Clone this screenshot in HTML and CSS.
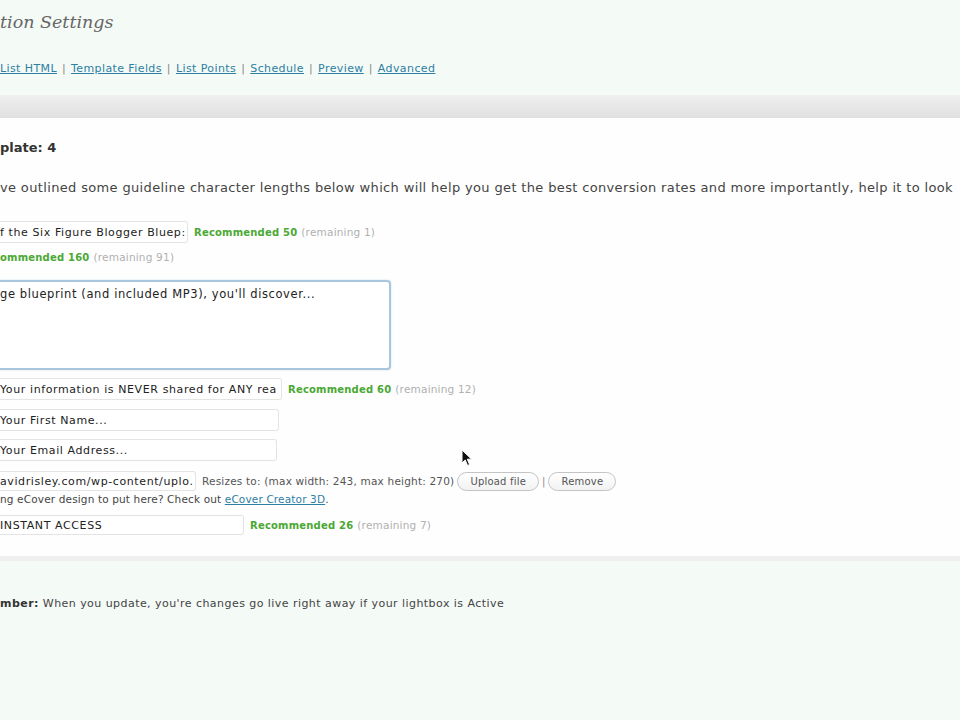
FILE: index.html
```html
<!DOCTYPE html>
<html>
<head>
<meta charset="utf-8">
<title>Settings</title>
<link rel="stylesheet" href="styles.css">
</head>
<body>
<div class="top">
  <h2 class="title">tion Settings</h2>
  <div class="tabs">
    <a href="#">List HTML</a><span class="sep">|</span><a href="#">Template Fields</a><span class="sep">|</span><a href="#">List Points</a><span class="sep">|</span><a href="#">Schedule</a><span class="sep">|</span><a href="#">Preview</a><span class="sep">|</span><a href="#">Advanced</a>
  </div>
</div>

<div class="panel">
  <div class="panel-head"></div>
  <div class="panel-body">
    <div class="label">plate: 4</div>
    <p class="intro">ve outlined some guideline character lengths below which will help you get the best conversion rates and more importantly, help it to look</p>

    <div class="row r1">
      <div class="field w188">f the Six Figure Blogger Bluep:</div>
      <span class="rec">Recommended 50</span><span class="rem">(remaining 1)</span>
    </div>
    <div class="row r2">
      <span class="rec">ommended 160</span><span class="rem">(remaining 91)</span>
    </div>
    <div class="area">ge blueprint (and included MP3), you'll discover...</div>

    <div class="row r3">
      <div class="field w282">Your information is NEVER shared for ANY rea</div>
      <span class="rec">Recommended 60</span><span class="rem">(remaining 12)</span>
    </div>
    <div class="row r4">
      <div class="field w279">Your First Name...</div>
    </div>
    <div class="row r5">
      <div class="field w277">Your Email Address...</div>
    </div>
    <div class="row r6">
      <div class="field w196">avidrisley.com/wp-content/uplo.</div>
      <span class="hint">Resizes to: (max width: 243, max height: 270)</span>
      <span class="btn first">Upload file</span><span class="bar">|</span><span class="btn">Remove</span>
    </div>
    <div class="small r7">ng eCover design to put here? Check out <a href="#">eCover Creator 3D</a>.</div>
    <div class="row r8">
      <div class="field w244">INSTANT ACCESS</div>
      <span class="rec">Recommended 26</span><span class="rem">(remaining 7)</span>
    </div>
  </div>
</div>

<p class="note"><b>mber:</b> When you update, you're changes go live right away if your lightbox is Active</p>

<svg class="cursor" width="12" height="18" viewBox="0 0 12 18">
  <path d="M1 1 L1 14 L4.2 11 L6.6 16.5 L8.6 15.6 L6.3 10.2 L10.6 10.2 Z" fill="#111" stroke="#fff" stroke-width="1"/>
</svg>
</body>
</html>
```

FILE: styles.css
```css
html, body {
  margin: 0;
  padding: 0;
}
body {
  background: #f4faf6;
  font-family: "DejaVu Sans", "Noto Sans", sans-serif;
  color: #333;
  width: 960px;
  height: 720px;
  overflow: hidden;
  position: relative;
}
.top {
  padding-top: 10px;
}
.title {
  margin: 0;
  font-family: "DejaVu Serif", "Liberation Serif", serif;
  font-style: italic;
  font-weight: normal;
  font-size: 17.5px;
  line-height: 24px;
  color: #666;
}
.tabs {
  margin-top: 27px;
  font-size: 11px;
  letter-spacing: 0.4px;
  line-height: 16px;
  white-space: nowrap;
}
.tabs a {
  color: #2d7fa3;
  text-decoration: underline;
}
.tabs .sep {
  color: #888;
  margin: 0 5px;
}
.panel {
  margin-top: 18px;
}
.panel-head {
  height: 23px;
  background: linear-gradient(#f0f0f0, #e9e9e9 40%, #e0e0e0);
}
.panel-body {
  background: #fefefe;
  padding: 22px 0 21px;
  border-bottom: 5px solid #efefef;
}
.label {
  font-weight: bold;
  font-size: 13px;
  line-height: 16px;
  color: #333;
}
.intro {
  margin: 24px 0 0;
  font-size: 13px;
  letter-spacing: 0.35px;
  line-height: 16px;
  color: #444;
  white-space: nowrap;
}
.row {
  display: flex;
  align-items: center;
  gap: 6px;
  white-space: nowrap;
}
.field {
  box-sizing: border-box;
  height: 22px;
  line-height: 21px;
  border: 1px solid #e4e4e4;
  border-left: none;
  border-radius: 0 3px 3px 0;
  background: #fff;
  font-size: 11px;
  letter-spacing: 0.6px;
  color: #222;
  overflow: hidden;
  white-space: nowrap;
}
.w188 { width: 188px; }
.w282 { width: 282px; }
.w279 { width: 279px; }
.w277 { width: 277px; }
.w196 { width: 196px; height: 20px; line-height: 19px; }
.w244 { width: 244px; height: 20px; line-height: 19px; }
.rec {
  color: #4aa834;
  font-weight: bold;
  font-size: 10px;
  letter-spacing: 0.2px;
}
.rem {
  color: #b0b0b0;
  font-size: 10.5px;
  letter-spacing: 0.2px;
  margin-left: -2px;
}
.r1 { margin-top: 25px; }
.r2 { margin-top: 7px; height: 14px; }
.area {
  box-sizing: border-box;
  margin-top: 16px;
  width: 391px;
  height: 90px;
  border: 2px solid #a9c6dc;
  border-left: none;
  border-radius: 0 4px 4px 0;
  box-shadow: 0 0 2px #c9dceb;
  background: #fff;
  padding-top: 5px;
  font-size: 11.5px;
  letter-spacing: 0.6px;
  line-height: 14px;
  color: #222;
  white-space: nowrap;
}
.r3 { margin-top: 8px; }
.r4 { margin-top: 9px; }
.r5 { margin-top: 8px; }
.r6 { margin-top: 10px; gap: 6px; }
.hint {
  font-size: 10.5px;
  letter-spacing: 0.2px;
  color: #555;
}
.btn {
  display: inline-block;
  box-sizing: border-box;
  height: 19px;
  line-height: 17px;
  padding: 0 12px;
  border: 1px solid #c4c4c4;
  border-radius: 10px;
  background: linear-gradient(#ffffff, #f2f2f2);
  font-size: 10px;
  letter-spacing: 0.2px;
  color: #555;
}
.btn.first {
  margin-left: -3px;
}
.bar {
  color: #888;
  font-size: 10px;
  margin: 0 -3px;
}
.small {
  font-size: 10.5px;
  letter-spacing: 0.15px;
  line-height: 14px;
  color: #444;
  white-space: nowrap;
}
.small a {
  color: #2d7fa3;
}
.r7 { margin-top: 1px; }
.r8 { margin-top: 9px; }
.note {
  margin: 35px 0 0;
  font-size: 11px;
  letter-spacing: 0.45px;
  line-height: 16px;
  color: #444;
  white-space: nowrap;
}
.note b {
  color: #333;
}
.cursor {
  position: absolute;
  left: 461px;
  top: 449px;
}
```
